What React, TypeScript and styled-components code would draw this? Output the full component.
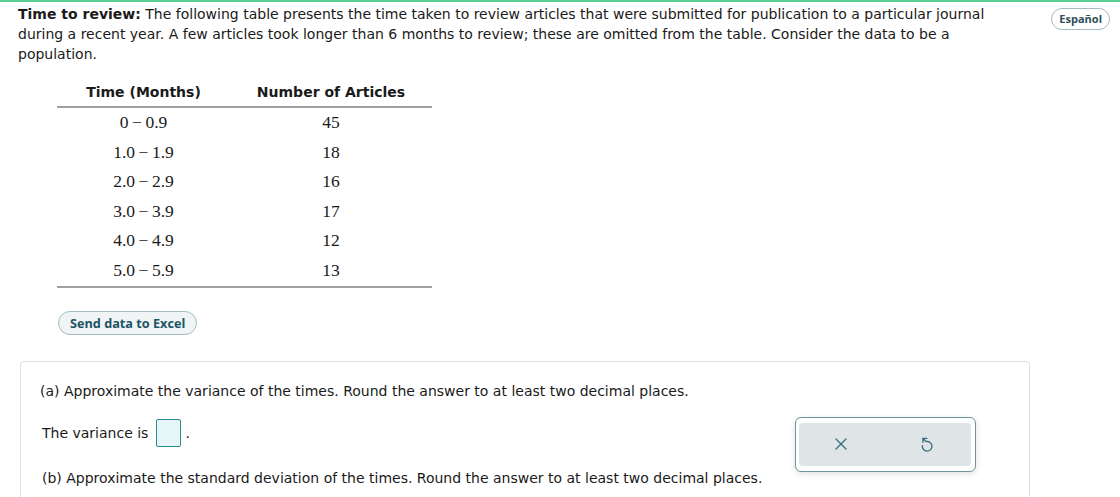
import React from "react";
import styled, { createGlobalStyle } from "styled-components";

const Global = createGlobalStyle`
  html, body { margin: 0; padding: 0; background: #fff; }
  body { font-family: "DejaVu Sans", Verdana, sans-serif; color: #1a1a1a; overflow: hidden; }
`;

const TopBar = styled.div`
  height: 2px;
  background: #5ccf96;
`;

const Page = styled.div`
  padding: 2px 10px 0 18px;
  display: flex;
  flex-direction: column;
`;

const Header = styled.div`
  display: flex;
  justify-content: space-between;
  align-items: flex-start;
`;

const Intro = styled.p`
  margin: 0;
  width: 990px;
  font-size: 14px;
  line-height: 20px;
`;

const Strong = styled.strong`
  font-weight: 700;
`;

const Pill = styled.button<{ $small?: boolean }>`
  font-family: "Open Sans", Lato, sans-serif;
  font-weight: 700;
  font-size: ${(p) => (p.$small ? "11px" : "12.7px")};
  color: ${(p) => (p.$small ? "#2b4e58" : "#1d5565")};
  background: ${(p) => (p.$small ? "#fff" : "#f0f4f5")};
  border: 1px solid #a5bcc3;
  border-radius: 12px;
  height: ${(p) => (p.$small ? "22px" : "24px")};
  padding: ${(p) => (p.$small ? "0 7px" : "0 11px")};
  line-height: 20px;
  cursor: pointer;
`;

const LangWrap = styled.div`
  margin-top: 4px;
`;

const Table = styled.table`
  margin: 20px 0 0 39px;
  border-collapse: collapse;
  width: 375px;
  table-layout: fixed;
`;

const Th = styled.th<{ $w: number }>`
  width: ${(p) => p.$w}px;
  font-size: 14px;
  font-weight: 700;
  padding: 0 0 5px;
  border-bottom: 2px solid #a0a0a0;
  text-align: center;
  line-height: 17px;
`;

const Td = styled.td<{ $last?: boolean }>`
  font-family: "Liberation Serif", "Times New Roman", serif;
  font-size: 17.5px;
  text-align: center;
  height: 29.6px;
  line-height: 29.6px;
  padding: 0;
  border-bottom: ${(p) => (p.$last ? "2px solid #a0a0a0" : "none")};
`;

const ExcelWrap = styled.div`
  margin: 23px 0 0 40px;
`;

const Panel = styled.div`
  margin: 26px 0 0 2px;
  width: 1010px;
  height: 200px;
  border: 1px solid #d5e1e5;
  border-radius: 4px;
  padding: 19px 0 0 19px;
  box-sizing: border-box;
  display: flex;
  flex-direction: column;
  font-size: 14px;
`;

const QText = styled.div`
  line-height: 20px;
`;

const AnswerRow = styled.div`
  display: flex;
  justify-content: space-between;
  align-items: flex-start;
  margin-top: 16px;
  width: 936px;
`;

const Answer = styled.div`
  display: flex;
  align-items: center;
  margin-left: 2px;
  margin-top: 2px;
`;

const InputBox = styled.span`
  display: inline-block;
  width: 23px;
  height: 26px;
  border: 1px solid #2a8b99;
  border-radius: 2px;
  background: #e6f6f8;
  margin: 0 4px 0 8px;
`;

const Tools = styled.div`
  width: 181px;
  height: 55px;
  border: 1px solid #6e939c;
  border-radius: 6px;
  background: #fff;
  box-shadow: 0 2px 6px rgba(0, 0, 0, 0.12);
  box-sizing: border-box;
  padding: 5px 4px 5px 3px;
`;

const ToolsInner = styled.div`
  height: 100%;
  background: #dfe5e7;
  border-radius: 4px;
  display: flex;
  align-items: center;
  gap: 73px;
  padding: 0 0 0 36px;
`;

const PartB = styled(QText)`
  margin-top: -4px;
  margin-left: 2px;
`;

const rows: [string, string, string][] = [
  ["0", "0.9", "45"],
  ["1.0", "1.9", "18"],
  ["2.0", "2.9", "16"],
  ["3.0", "3.9", "17"],
  ["4.0", "4.9", "12"],
  ["5.0", "5.9", "13"],
];

export default function App() {
  return (
    <>
      <Global />
      <TopBar />
      <Page>
        <Header>
          <Intro>
            <Strong>Time to review:</Strong> The following table presents the time taken to review articles that were
            submitted for publication to a particular journal during a recent year. A few articles took longer
            than 6 months to review; these are omitted from the table. Consider the data to be a population.
          </Intro>
          <LangWrap>
            <Pill $small>Español</Pill>
          </LangWrap>
        </Header>
        <Table>
          <thead>
            <tr>
              <Th $w={173}>Time (Months)</Th>
              <Th $w={202}>Number of Articles</Th>
            </tr>
          </thead>
          <tbody>
            {rows.map(([a, b, n], i) => {
              const last = i === rows.length - 1;
              return (
                <tr key={i}>
                  <Td $last={last}>
                    {a}
                    {"\u2009\u2212\u2009"}
                    {b}
                  </Td>
                  <Td $last={last}>{n}</Td>
                </tr>
              );
            })}
          </tbody>
        </Table>
        <ExcelWrap>
          <Pill>Send data to Excel</Pill>
        </ExcelWrap>
        <Panel>
          <QText>(a) Approximate the variance of the times. Round the answer to at least two decimal places.</QText>
          <AnswerRow>
            <Answer>
              The variance is
              <InputBox />.
            </Answer>
            <Tools>
              <ToolsInner>
                <svg width="12" height="12" viewBox="0 0 12 12" fill="none" stroke="#3d6f7c" strokeWidth="1.4" strokeLinecap="round">
                  <path d="M1 1 L11 11 M11 1 L1 11" />
                </svg>
                <svg width="13" height="17" viewBox="0 0 13 17" fill="none" stroke="#3d6f7c" strokeWidth="1.4" strokeLinecap="round" strokeLinejoin="round">
                  <path d="M2.4 9.6 A4.8 4.8 0 1 0 6.2 5.6 L3 2.4" />
                  <path d="M6.8 2.4 H3 V6.2" />
                </svg>
              </ToolsInner>
            </Tools>
          </AnswerRow>
          <PartB>(b) Approximate the standard deviation of the times. Round the answer to at least two decimal places.</PartB>
        </Panel>
      </Page>
    </>
  );
}
